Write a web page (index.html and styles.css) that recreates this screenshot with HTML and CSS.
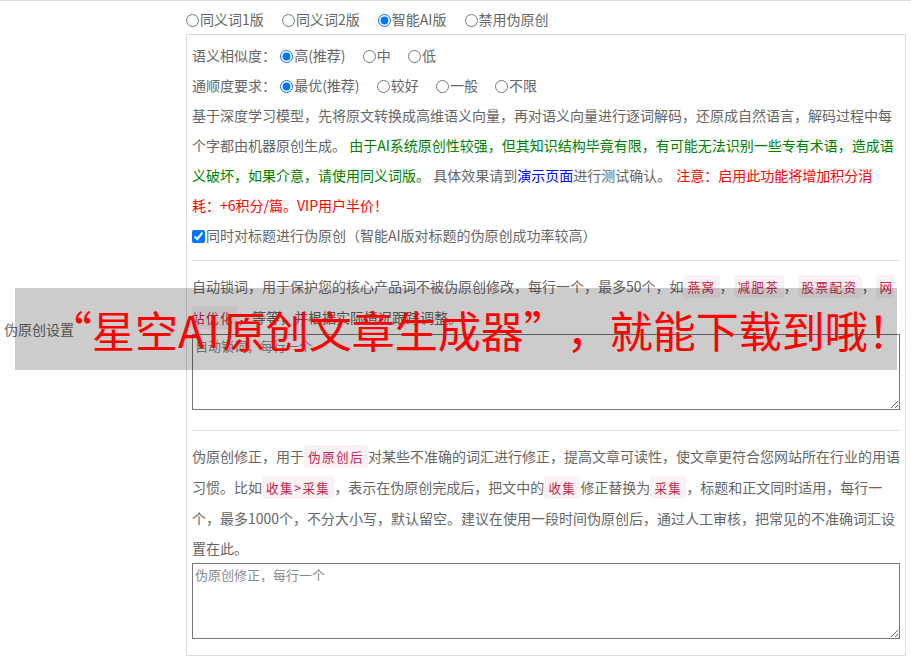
FILE: index.html
```html
<!DOCTYPE html>
<html lang="zh-CN">
<head>
<meta charset="utf-8">
<title>伪原创设置</title>
<link rel="stylesheet" href="styles.css">
</head>
<body>
<div class="row">
  <div class="label-cell">伪原创设置</div>
  <div class="content-cell">
    <div class="modes">
      <label class="opt"><input type="radio" name="mode">同义词1版</label>
      <label class="opt"><input type="radio" name="mode">同义词2版</label>
      <label class="opt"><input type="radio" name="mode" checked>智能AI版</label>
      <label class="opt"><input type="radio" name="mode">禁用伪原创</label>
    </div>
    <div class="box">
      <div class="line">
        <span class="key">语义相似度：</span>
        <label class="opt"><input type="radio" name="sim" checked>高(推荐)</label>
        <label class="opt"><input type="radio" name="sim">中</label>
        <label class="opt"><input type="radio" name="sim">低</label>
      </div>
      <div class="line">
        <span class="key">通顺度要求：</span>
        <label class="opt"><input type="radio" name="flu" checked>最优(推荐)</label>
        <label class="opt"><input type="radio" name="flu">较好</label>
        <label class="opt"><input type="radio" name="flu">一般</label>
        <label class="opt"><input type="radio" name="flu">不限</label>
      </div>
      <p class="desc">基于深度学习模型，先将原文转换成高维语义向量，再对语义向量进行逐词解码，还原成自然语言，解码过程中每个字都由机器原创生成。 <span class="green">由于AI系统原创性较强，但其知识结构毕竟有限，有可能无法识别一些专有术语，造成语义破坏，如果介意，请使用同义词版。</span> 具体效果请到<a class="link" href="#">演示页面</a>进行测试确认。 <span class="red">注意：启用此功能将增加积分消耗：+6积分/篇。VIP用户半价！</span></p>
      <div class="line">
        <label class="chk"><input type="checkbox" checked>同时对标题进行伪原创（智能AI版对标题的伪原创成功率较高）</label>
      </div>
      <hr class="sep">
      <p class="desc">自动锁词，用于保护您的核心产品词不被伪原创修改，每行一个，最多50个，如<code>燕窝</code>，<code>减肥茶</code>，<code>股票配资</code>，<code>网站优化</code>，等等，并根据实际情况跟踪调整。</p>
      <textarea class="area" placeholder="自动锁词，每行一个"></textarea>
      <hr class="sep">
      <p class="desc">伪原创修正，用于<code>伪原创后</code>对某些不准确的词汇进行修正，提高文章可读性，使文章更符合您网站所在行业的用语习惯。比如<code>收集&gt;采集</code>，表示在伪原创完成后，把文中的<code>收集</code>修正替换为<code>采集</code>，标题和正文同时适用，每行一个，最多1000个，不分大小写，默认留空。建议在使用一段时间伪原创后，通过人工审核，把常见的不准确词汇设置在此。</p>
      <textarea class="area last" placeholder="伪原创修正，每行一个"></textarea>
    </div>
  </div>
</div>
<div class="banner"><span class="banner-text">“星空<span class="latin">AI</span>原创文章生成器”，就能下载到哦！</span></div>
</body>
</html>
```
FILE: styles.css
```css
html, body {
  margin: 0;
  padding: 0;
  background: #fff;
}
body {
  position: relative;
  font-family: "Noto Sans CJK SC", "Liberation Sans", sans-serif;
  font-size: 14px;
  color: #666;
  width: 911px;
  height: 658px;
  overflow: hidden;
  text-spacing-trim: space-all;
}
.row {
  display: grid;
  grid-template-columns: 186px 720px;
  border-top: 1px solid #ddd;
}
.label-cell {
  align-self: center;
  padding-left: 4px;
  padding-bottom: 5px;
  color: #666;
}
.content-cell {
  padding-bottom: 6px;
}
.modes {
  height: 30px;
  line-height: 30px;
  padding-top: 3px;
  white-space: nowrap;
}
.opt {
  margin-right: 15px;
}
.opt input {
  width: 13px;
  height: 13px;
  margin: 0 1px 0 0;
  vertical-align: -2px;
}
.box {
  border: 1px solid #ddd;
  padding: 5px 5px;
}
.line {
  line-height: 30px;
  white-space: nowrap;
}
.key {
  margin-right: 1px;
}
.line .opt {
  margin-right: 14px;
}
.chk input {
  width: 13px;
  height: 13px;
  margin: 0 1px 0 0;
  vertical-align: -2px;
}
.desc {
  margin: 0;
  line-height: 30px;
}
.green { color: #008000; }
.red { color: #ff0000; margin-left: 2px; }
.link { color: #0000ff; text-decoration: none; }
code {
  font-family: "Noto Sans CJK SC", sans-serif;
  font-size: 12.6px;
  letter-spacing: 1.4px;
  padding: 2px 4px;
  color: #c7254e;
  background: #f9f2f4;
  border-radius: 4px;
}
.sep {
  border: 0;
  border-top: 1px solid #e2e2e2;
  margin: 10px 0;
  height: 0;
}
.area {
  display: block;
  box-sizing: border-box;
  width: 100%;
  height: 76px;
  margin: 1px 0 20px 0;
  padding: 2px 2px;
  border: 1px solid #767676;
  font-family: "Noto Sans CJK SC", sans-serif;
  font-size: 13px;
  line-height: 18px;
  color: #333;
  resize: vertical;
}
.area::placeholder {
  color: #8a8a8a;
}
.area.last {
  margin-top: 0;
  margin-bottom: 11px;
}
.banner {
  position: absolute;
  left: 15px;
  top: 288px;
  width: 882px;
  height: 82px;
  background: rgba(0, 0, 0, 0.2);
  display: flex;
  align-items: center;
  padding-left: 34px;
  box-sizing: border-box;
  overflow: hidden;
  white-space: nowrap;
}
.banner-text {
  color: #ff0000;
  font-size: 43px;
  line-height: 1;
}
.latin {
  letter-spacing: 3px;
}
```
